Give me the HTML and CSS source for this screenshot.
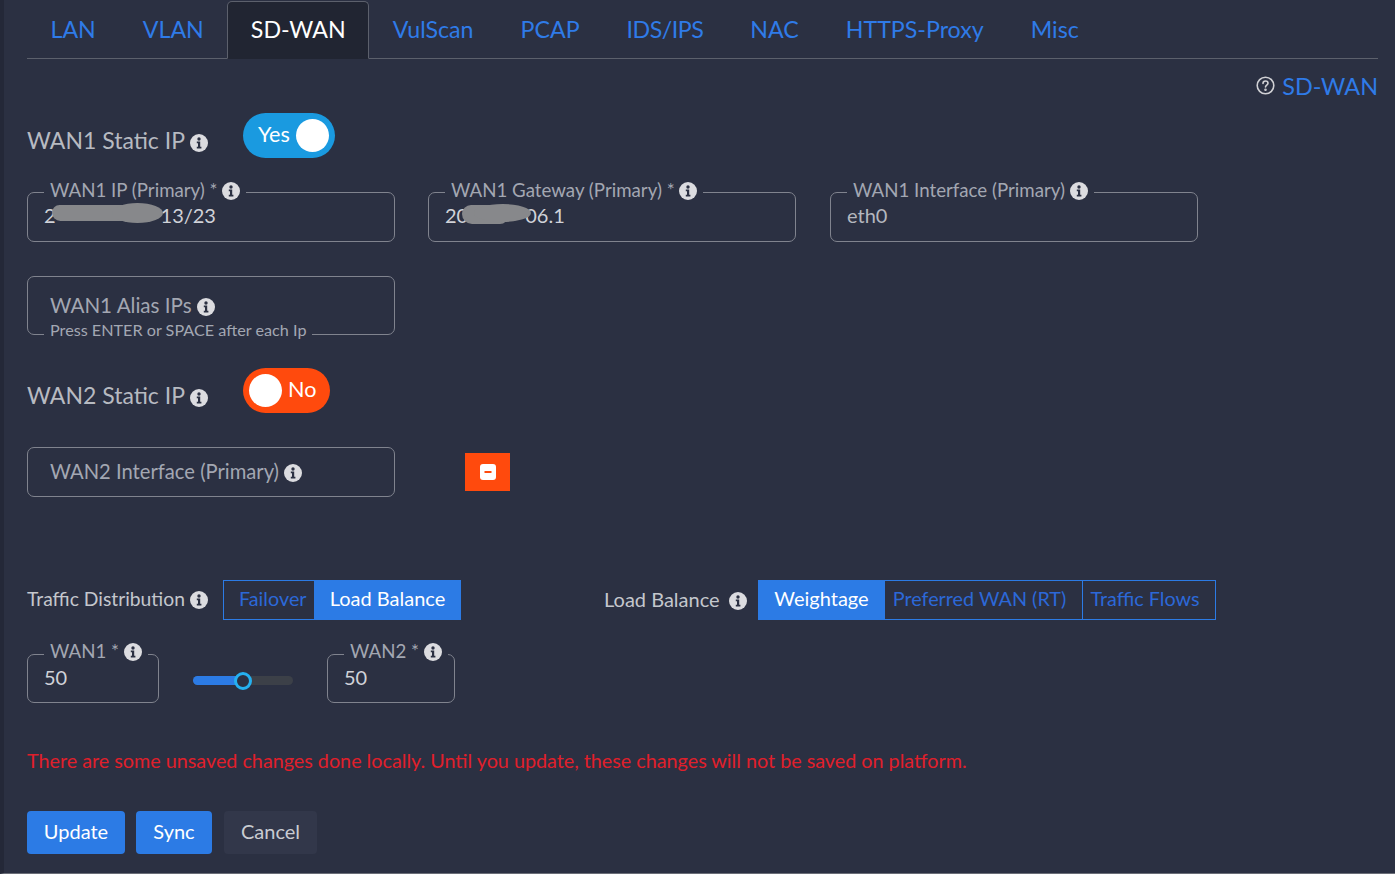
FILE: index.html
```html
<!DOCTYPE html>
<html lang="en">
<head>
  <meta charset="UTF-8" />
  <title>SD-WAN</title>
  <link rel="stylesheet" href="styles.css">
</head>
<body>
  <svg class="defs" width="0" height="0">
    <symbol id="info" viewBox="0 0 18 18">
      <circle cx="9" cy="9" r="9" fill="#dcdce0"/>
      <circle cx="9" cy="5" r="1.7" fill="#2b3042"/>
      <path d="M6.8 7.6h3.4v5.2h1.2v1.6H6.8v-1.6H8V9.2H6.8z" fill="#2b3042"/>
    </symbol>
  </svg>

  <div class="page">
    <!-- Tabs -->
    <nav class="tabs">
      <a class="tab">LAN</a>
      <a class="tab">VLAN</a>
      <a class="tab active">SD-WAN</a>
      <a class="tab">VulScan</a>
      <a class="tab">PCAP</a>
      <a class="tab tab-narrow">IDS/IPS</a>
      <a class="tab">NAC</a>
      <a class="tab">HTTPS-Proxy</a>
      <a class="tab">Misc</a>
    </nav>

    <div class="help">
      <svg class="help-icon" width="19" height="19" viewBox="0 0 19 19" fill="none" stroke="#d0d0d4" stroke-width="1.6">
        <circle cx="9.5" cy="9.5" r="8.3"/>
        <path d="M7 7.4c0-1.5 1.1-2.4 2.5-2.4s2.5.9 2.5 2.2c0 1.8-2.5 1.9-2.5 3.7" stroke-linecap="round"/>
        <circle cx="9.5" cy="13.8" r=".5" fill="#d0d0d4"/>
      </svg>
      <a class="help-link">SD-WAN</a>
    </div>

    <!-- WAN1 -->
    <div class="static-row">
      <span class="static-label">WAN1 Static IP <svg class="info"><use href="#info"/></svg></span>
      <div class="toggle yes"><span class="toggle-text">Yes</span><span class="thumb"></span></div>
    </div>

    <div class="field-row first-fields">
      <fieldset class="field">
        <legend>WAN1 IP (Primary) * <svg class="info"><use href="#info"/></svg></legend>
        <span class="value">2<span class="hidden-ip ip-one">00.00.00.</span>13/23</span>
        <span class="blur blur-one"></span>
      </fieldset>
      <fieldset class="field">
        <legend>WAN1 Gateway (Primary) * <svg class="info"><use href="#info"/></svg></legend>
        <span class="value">20<span class="hidden-ip ip-two">0.00.0</span>06.1</span>
        <span class="blur blur-two"></span>
      </fieldset>
      <fieldset class="field third">
        <legend>WAN1 Interface (Primary) <svg class="info"><use href="#info"/></svg></legend>
        <span class="value muted">eth0</span>
      </fieldset>
    </div>

    <div class="alias-box">
      <span class="alias-label">WAN1 Alias IPs <svg class="info"><use href="#info"/></svg></span>
      <span class="alias-hint">Press ENTER or SPACE after each Ip</span>
    </div>

    <!-- WAN2 -->
    <div class="static-row wan2-row">
      <span class="static-label">WAN2 Static IP <svg class="info"><use href="#info"/></svg></span>
      <div class="toggle no"><span class="thumb"></span><span class="toggle-text">No</span></div>
    </div>

    <div class="wan2-fields">
      <div class="plain-box">WAN2 Interface (Primary) <svg class="info"><use href="#info"/></svg></div>
      <button class="minus-btn">
        <svg width="16" height="16" viewBox="0 0 16 16">
          <rect x="0" y="0" width="16" height="16" rx="3" fill="#fff"/>
          <rect x="4.5" y="7" width="7" height="2" fill="#ff4a0d"/>
        </svg>
      </button>
    </div>

    <!-- Traffic -->
    <div class="traffic-row">
      <span class="traffic-label">Traffic Distribution <svg class="info"><use href="#info"/></svg></span>
      <div class="segments seg-traffic">
        <span class="seg seg-failover">Failover</span>
        <span class="seg on seg-load">Load Balance</span>
      </div>
      <span class="traffic-label lb-label">Load Balance <svg class="info"><use href="#info"/></svg></span>
      <div class="segments seg-lb">
        <span class="seg on seg-weight">Weightage</span>
        <span class="seg seg-pref">Preferred WAN (RT)</span>
        <span class="seg seg-flows">Traffic Flows</span>
      </div>
    </div>

    <div class="weight-row">
      <fieldset class="field small wan1-weight">
        <legend>WAN1 * <svg class="info"><use href="#info"/></svg></legend>
        <span class="value">50</span>
      </fieldset>
      <div class="slider"><span class="slider-fill"></span><span class="slider-thumb"></span></div>
      <fieldset class="field small wan2-weight">
        <legend>WAN2 * <svg class="info"><use href="#info"/></svg></legend>
        <span class="value">50</span>
      </fieldset>
    </div>

    <p class="unsaved">There are some unsaved changes done locally. Until you update, these changes will not be saved on platform.</p>

    <div class="actions">
      <button class="btn primary btn-update">Update</button>
      <button class="btn primary btn-sync">Sync</button>
      <button class="btn cancel">Cancel</button>
    </div>
  </div>
</body>
</html>
```

FILE: styles.css
```css
/* Base */
html, body {
  margin: 0;
  height: 874px;
  overflow: hidden;
}

body {
  background: #2b3042;
  color: #c4c7cd;
  font-family: "Lato", "Open Sans", sans-serif;
}

.defs { position: absolute; }

.page {
  box-sizing: border-box;
  height: 874px;
  width: 1395px;
  padding: 1px 17px 0 23px;
  border-left: 4px solid #242838;
  border-bottom: 1px solid #6b6e78;
}

.info {
  width: 18px;
  height: 18px;
  vertical-align: -3px;
}

/* Tabs */
.tabs {
  display: flex;
  height: 57px;
  border-bottom: 1px solid #5c606c;
}

.tab {
  box-sizing: border-box;
  height: 58px;
  padding: 0 22.5px;
  line-height: 54px;
  font-size: 23.2px;
  color: #2f7be8;
  border: 1px solid transparent;
}

.tab-narrow { letter-spacing: -.5px; }

.tab.active {
  color: #fff;
  background: #212532;
  border: 1px solid #5c606c;
  border-bottom-color: #212532;
  border-radius: 5px 5px 0 0;
}

/* Help link */
.help {
  box-sizing: border-box;
  display: flex;
  justify-content: flex-end;
  align-items: center;
  gap: 7px;
  height: 28px;
  margin-top: 14px;
  padding-bottom: 3px;
}

.help-link {
  color: #2f7be8;
  font-size: 23.4px;
}

/* Static IP rows */
.static-row {
  display: flex;
  margin-top: 12px;
}

.wan2-row { margin-top: 33px; }

.static-label {
  width: 216px;
  margin-top: 13px;
  line-height: 28px;
  font-size: 23px;
  color: #b7bac1;
  white-space: nowrap;
}

.toggle {
  display: flex;
  align-items: center;
  box-sizing: border-box;
  height: 45px;
  border-radius: 23px;
  color: #fff;
  font-size: 21.6px;
  padding: 0 6px;
}

.toggle-text { padding-bottom: 3px; }

.toggle.yes {
  width: 92px;
  background: #1a9ae0;
  justify-content: space-between;
  padding-left: 15px;
}

.toggle.no {
  width: 87px;
  background: #ff4a0d;
  gap: 6px;
}

.thumb {
  width: 33px;
  height: 33px;
  border-radius: 50%;
  background: #fff;
}

/* Floating-label fields */
.field-row {
  display: flex;
  gap: 33px;
}

.first-fields { margin-top: 22px; }

.field {
  box-sizing: border-box;
  position: relative;
  width: 368px;
  height: 62px;
  margin: 0;
  padding: 0 16px;
  border: 1px solid #80838e;
  border-radius: 7px;
  min-width: 0;
}

.field.third { margin-left: 1px; }

.field legend {
  box-sizing: border-box;
  padding: 0 6px;
  height: 24px;
  line-height: 20px;
  font-size: 18.7px;
  color: #a3a7b2;
  white-space: nowrap;
}

.field.small legend { line-height: 18px; }

.value {
  display: block;
  font-size: 20px;
  line-height: 22px;
  color: #d0d2d8;
  white-space: nowrap;
}

.value.muted { color: #b4b7bf; }

.hidden-ip { color: transparent; }
.ip-one { letter-spacing: 2.35px; }
.ip-two { letter-spacing: .2px; }

/* smudge over the redacted address */
.blur {
  position: absolute;
  background: #87888b;
  border-radius: 9px 6px 8px 10px;
}

.blur::after {
  content: "";
  position: absolute;
  background: #87888b;
  border-radius: 50%;
}

.blur-one { left: 24px; top: 1px; width: 86px; height: 16px; }
.blur-one::after { left: 60px; top: -2px; width: 51px; height: 20px; }
.blur-two { left: 33px; top: 1px; width: 46px; height: 19px; }
.blur-two::after { left: 12px; top: -1px; width: 57px; height: 18px; }

.alias-box {
  box-sizing: border-box;
  position: relative;
  width: 368px;
  height: 59px;
  margin-top: 34px;
  padding: 16px 22px 0;
  border: 1px solid #80838e;
  border-radius: 7px;
}

.alias-label {
  font-size: 20.6px;
  line-height: 24px;
  color: #a3a7b2;
}

/* sits on the bottom border, cuts a notch in it */
.alias-hint {
  position: absolute;
  left: 16px;
  bottom: -5px;
  padding: 0 6px;
  background: #2b3042;
  font-size: 16.2px;
  line-height: 18px;
  color: #a3a7b2;
  white-space: nowrap;
}

.wan2-fields {
  display: flex;
  align-items: center;
  margin-top: 34px;
}

.plain-box {
  box-sizing: border-box;
  width: 368px;
  height: 50px;
  padding-left: 22px;
  border: 1px solid #80838e;
  border-radius: 7px;
  line-height: 46px;
  font-size: 20.2px;
  color: #a3a7b2;
}

.minus-btn {
  display: flex;
  align-items: center;
  justify-content: center;
  width: 45px;
  height: 38px;
  margin-left: 70px;
  padding: 0;
  border: 0;
  background: #ff4a0d;
}

/* Traffic distribution */
.traffic-row {
  display: flex;
  align-items: center;
  height: 40px;
  margin-top: 83px;
}

.traffic-label {
  width: 196px;
  padding-bottom: 3px;
  font-size: 19.3px;
  white-space: nowrap;
}

.lb-label {
  width: 154px;
  margin-left: 143px;
  font-size: 20px;
}

.lb-label .info { margin-left: 4px; }

.segments { display: flex; height: 40px; }

.seg {
  box-sizing: border-box;
  display: flex;
  align-items: center;
  justify-content: center;
  padding-bottom: 4px;
  border: 1px solid #2c7be5;
  font-size: 19.8px;
  color: #2c68d8;
  white-space: nowrap;
}

.seg + .seg { border-left: 0; }
.seg.on { background: #2c7be5; color: #fff; font-size: 20px; }

.seg-failover { width: 92px; justify-content: flex-start; padding-left: 15px; }
.seg-load { width: 146px; }
.seg-weight { width: 127px; }
.seg-pref { width: 198px; padding-right: 8px; }
.seg-flows { width: 133px; padding-right: 8px; }

/* Weights */
.weight-row {
  display: flex;
  align-items: flex-start;
  margin-top: 22px;
}

.field.small { height: 61px; }
.wan1-weight { width: 132px; }
.wan2-weight { width: 128px; }

.slider {
  position: relative;
  width: 100px;
  height: 9px;
  margin: 34px 34px 0;
  border-radius: 5px;
  background: #3c4048;
}

.slider-fill {
  display: block;
  width: 50%;
  height: 100%;
  border-radius: 5px 0 0 5px;
  background: #2c7be5;
}

.slider-thumb {
  position: absolute;
  left: 41px;
  top: -4px;
  box-sizing: border-box;
  width: 18px;
  height: 18px;
  border: 3px solid #25b0f0;
  border-radius: 50%;
  background: #2b3042;
}

/* Footer */
.unsaved {
  margin: 45px 0 0;
  line-height: 26px;
  font-size: 19.75px;
  color: #e01f2b;
  white-space: nowrap;
}

.actions {
  display: flex;
  margin-top: 37px;
}

.btn {
  height: 43px;
  padding: 0 0 4px;
  border: 0;
  border-radius: 4px;
  font-family: inherit;
  font-size: 20px;
}

.primary { background: #2c7be5; color: #fff; }
.btn-update { width: 98px; margin-right: 11px; }
.btn-sync { width: 76px; margin-right: 12px; }
.cancel { width: 93px; background: #32374a; color: #c9ccd2; }
```
